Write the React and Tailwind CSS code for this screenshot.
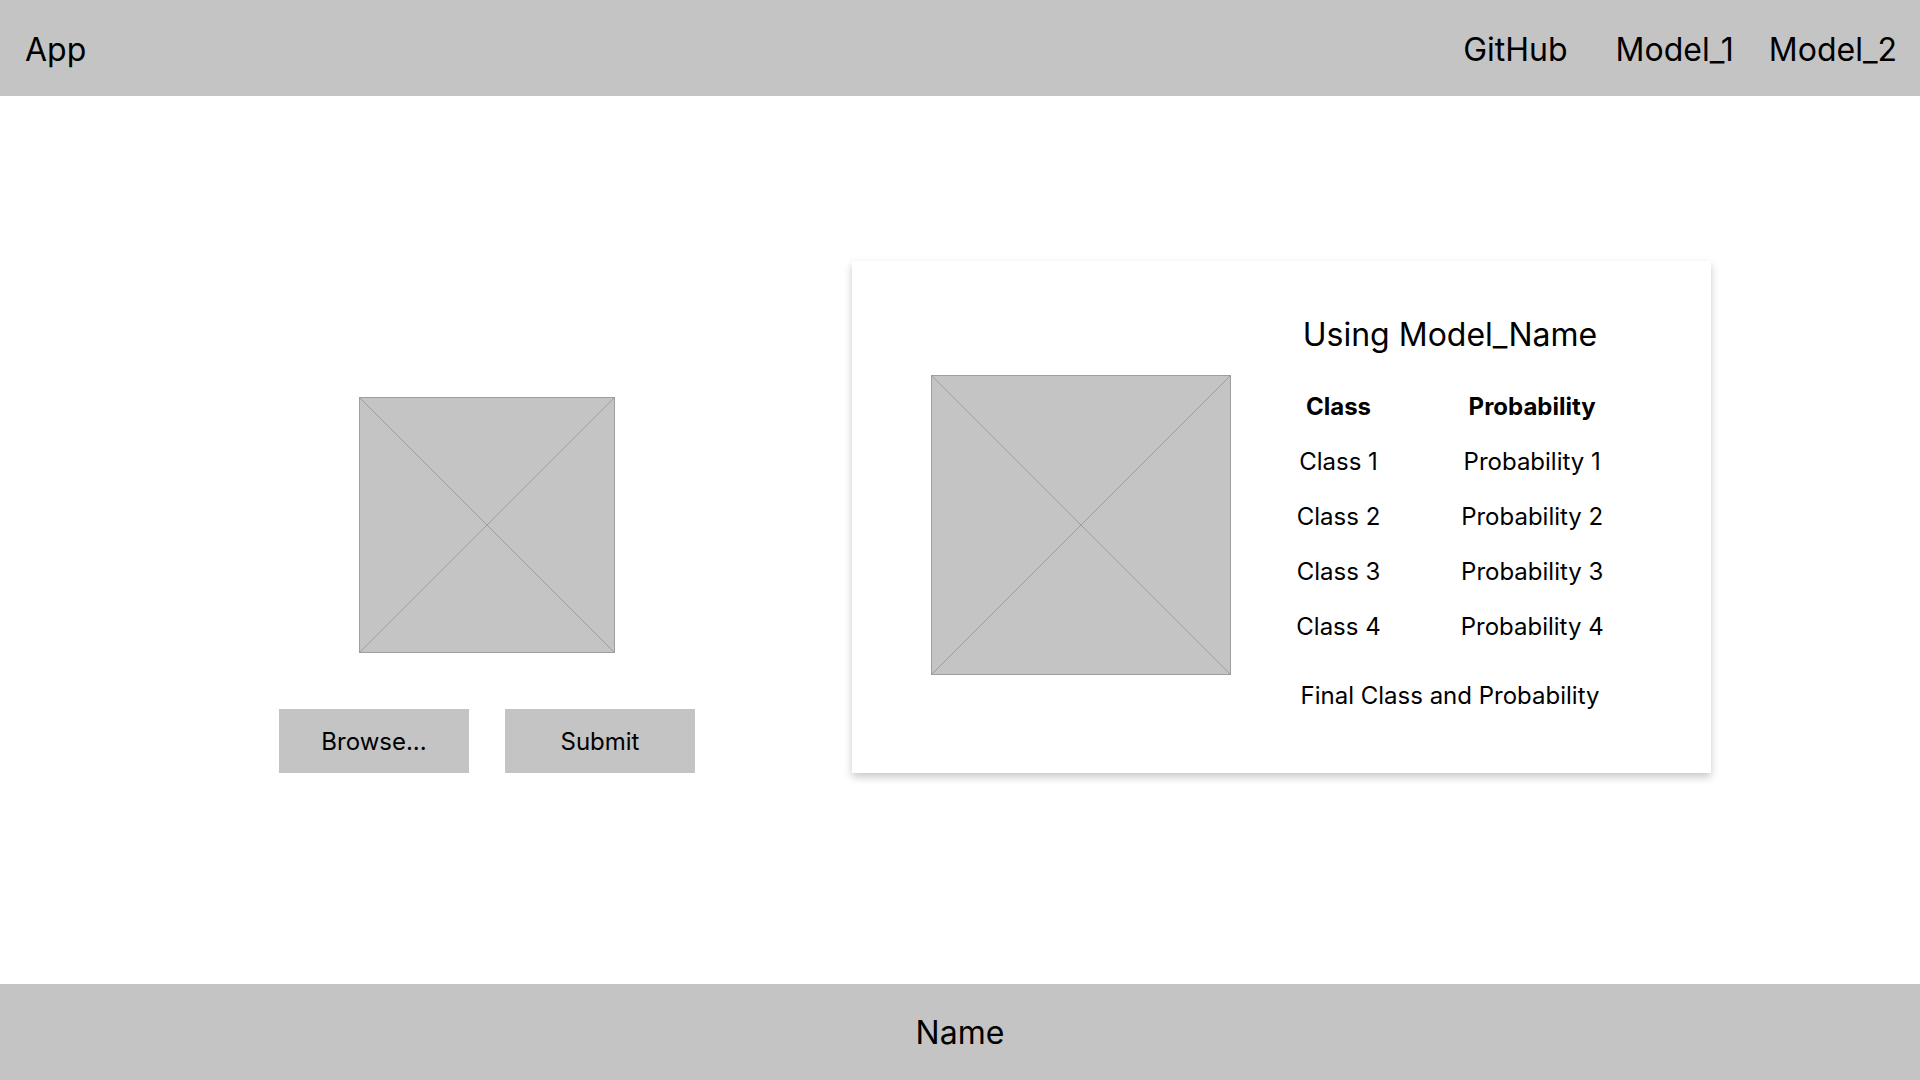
import React from "react";

const rows = [
  ["Class 1", "Probability 1"],
  ["Class 2", "Probability 2"],
  ["Class 3", "Probability 3"],
  ["Class 4", "Probability 4"],
];

// grey placeholder box with the crossed diagonals
function Placeholder({ className }) {
  return (
    <div className={`relative border border-[#9e9e9e] bg-[#c4c4c4] ${className}`}>
      <svg className="absolute inset-0 h-full w-full" viewBox="0 0 100 100" preserveAspectRatio="none">
        <line x1="0" y1="0" x2="100" y2="100" stroke="#9e9e9e" strokeWidth="1" vectorEffect="non-scaling-stroke" />
        <line x1="100" y1="0" x2="0" y2="100" stroke="#9e9e9e" strokeWidth="1" vectorEffect="non-scaling-stroke" />
      </svg>
    </div>
  );
}

export default function App() {
  return (
    <div className="flex min-h-screen flex-col bg-white font-['Inter','Liberation_Sans',sans-serif] text-black">
      {/* header */}
      <header className="flex h-[96px] shrink-0 items-center justify-between bg-[#c4c4c4] pl-[25px] pr-[23px] pt-[3px] text-[32px] leading-10">
        <span>App</span>
        <nav className="flex items-center">
          <a>GitHub</a>
          <a className="ml-[48px]">Model_1</a>
          <a className="ml-[35px]">Model_2</a>
        </nav>
      </header>

      {/* main */}
      <main className="flex flex-1 items-end pb-[211px] pl-[279px]">
        <div className="flex w-[416px] flex-col items-center">
          <Placeholder className="mt-px h-[256px] w-[256px]" />
          <div className="mt-[56px] flex gap-[36px]">
            <button className="h-[64px] w-[190px] bg-[#c4c4c4] pt-[2px] text-2xl">Browse...</button>
            <button className="h-[64px] w-[190px] bg-[#c4c4c4] pt-[2px] text-2xl">Submit</button>
          </div>
        </div>

        <section className="ml-[157px] flex h-[512px] w-[859px] items-start bg-white pl-[79px] pt-[54px] shadow-[0_4px_8px_rgba(0,0,0,0.22)]">
          <Placeholder className="mt-[60px] h-[300px] w-[300px] shrink-0" />
          <div className="ml-[54px] flex w-[330px] flex-col items-center">
            <h2 className="text-[32px] leading-10">Using Model_Name</h2>
            <div className="mt-[36px] grid grid-cols-[auto_auto] gap-x-20 gap-y-[23px] text-center text-2xl leading-8">
              <span className="font-bold">Class</span>
              <span className="font-bold">Probability</span>
              {rows.map(([c, p]) => (
                <React.Fragment key={c}>
                  <span>{c}</span>
                  <span>{p}</span>
                </React.Fragment>
              ))}
            </div>
            <p className="mt-[37px] text-2xl leading-8">Final Class and Probability</p>
          </div>
        </section>
      </main>

      {/* footer */}
      <footer className="flex h-[96px] shrink-0 items-center justify-center bg-[#c4c4c4] pt-[2px] text-[32px] leading-10">
        Name
      </footer>
    </div>
  );
}
